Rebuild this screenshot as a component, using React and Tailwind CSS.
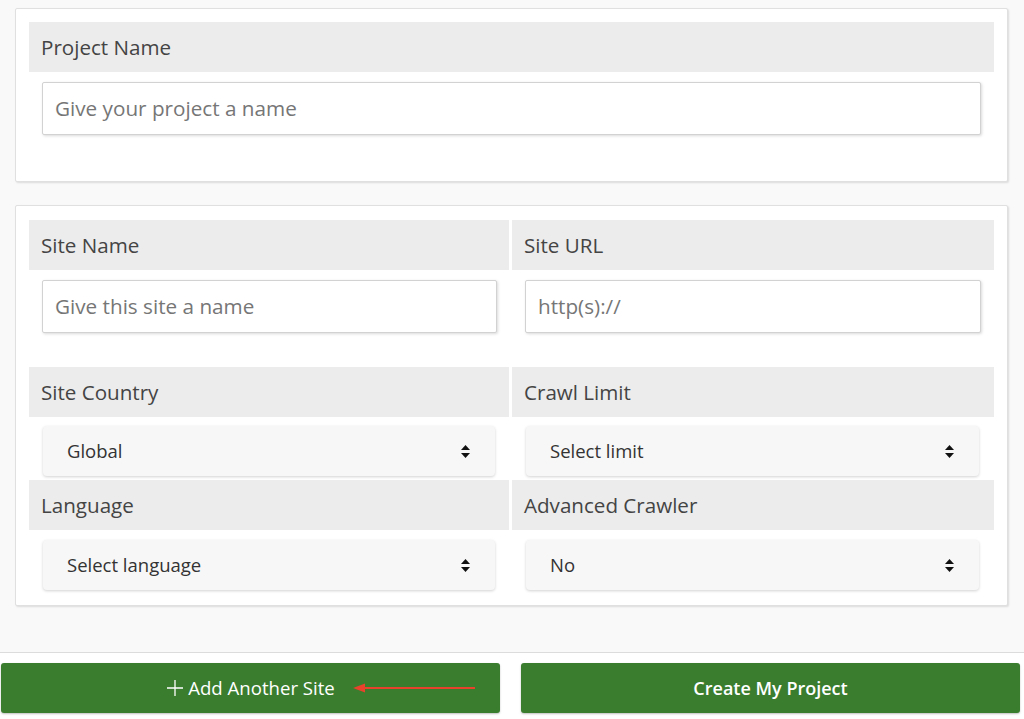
import React from "react";

const font = { fontFamily: '"Open Sans", "Liberation Sans", sans-serif' };

function Header({ children }) {
  return (
    <div className="h-[50px] bg-[#ececec] flex items-center pl-[12px] text-[20.6px] text-[#444]">
      {children}
    </div>
  );
}

function TextInput({ placeholder }) {
  return (
    <div className="h-[53px] bg-white border border-[#d2d2d2] rounded-[2px] shadow-[1px_1px_3px_rgba(0,0,0,0.15)] flex items-center pl-[12px] text-[20.7px] text-[#767676]">
      {placeholder}
    </div>
  );
}

function Arrows() {
  return (
    <svg width="11" height="17" viewBox="0 0 11 17">
      <path d="M1 7 L5.5 2 L10 7 Z" fill="#111" />
      <path d="M1 10 L5.5 15 L10 10 Z" fill="#111" />
    </svg>
  );
}

function Select({ value }) {
  return (
    <div className="h-[50px] bg-[#f7f7f7] rounded-[4px] shadow-[0_1px_3px_rgba(0,0,0,0.18)] flex items-center justify-between pl-[24px] pr-[24px] text-[18.5px] text-[#333]">
      <span>{value}</span>
      <Arrows />
    </div>
  );
}

export default function App() {
  return (
    <div className="w-[1024px] h-[719px] bg-[#f9f9f9] flex flex-col overflow-hidden" style={font}>
      <div className="pl-[15px] pr-[16px] pt-[8px] flex flex-col gap-[23px]">
        {/* Card 1 */}
        <div className="h-[174px] bg-white border border-[#e0e0e0] rounded-[2px] shadow-[1px_1px_2px_rgba(0,0,0,0.12)] pt-[13px] px-[13px]">
          <Header>Project Name</Header>
          <div className="mt-[10px] mx-[13px]">
            <TextInput placeholder="Give your project a name" />
          </div>
        </div>

        {/* Card 2 */}
        <div className="h-[401px] bg-white border border-[#e0e0e0] rounded-[2px] shadow-[1px_1px_2px_rgba(0,0,0,0.12)] pt-[14px] px-[13px]">
          <div className="grid grid-cols-[480px_1fr] gap-x-[3px]">
            <div className="flex flex-col">
              <Header>Site Name</Header>
              <div className="mt-[10px] ml-[13px] mr-[12px]">
                <TextInput placeholder="Give this site a name" />
              </div>
            </div>
            <div className="flex flex-col">
              <Header>Site URL</Header>
              <div className="mt-[10px] ml-[13px] mr-[13px]">
                <TextInput placeholder="http(s)://" />
              </div>
            </div>
          </div>

          <div className="grid grid-cols-[480px_1fr] gap-x-[3px] mt-[34px]">
            <div className="flex flex-col">
              <Header>Site Country</Header>
              <div className="mt-[9px] ml-[14px] mr-[14px]">
                <Select value="Global" />
              </div>
            </div>
            <div className="flex flex-col">
              <Header>Crawl Limit</Header>
              <div className="mt-[9px] ml-[14px] mr-[15px]">
                <Select value="Select limit" />
              </div>
            </div>
          </div>

          <div className="grid grid-cols-[480px_1fr] gap-x-[3px] mt-[4px]">
            <div className="flex flex-col">
              <Header>Language</Header>
              <div className="mt-[10px] ml-[14px] mr-[14px]">
                <Select value="Select language" />
              </div>
            </div>
            <div className="flex flex-col">
              <Header>Advanced Crawler</Header>
              <div className="mt-[10px] ml-[14px] mr-[15px]">
                <Select value="No" />
              </div>
            </div>
          </div>
        </div>
      </div>

      <div className="mt-[46px] border-t border-[#dcdcdc] bg-white flex-1 pt-[10px] pl-[1px] pr-[4px] flex gap-[21px] items-start">
        <button className="flex-1 h-[50px] bg-[#3a7d2e] rounded-[3px] shadow-[0_1px_2px_rgba(0,0,0,0.25)] flex items-center justify-center text-white text-[18.6px] relative">
          <span className="flex items-center gap-[4px]">
            <svg width="18" height="18" viewBox="0 0 18 18">
              <path d="M9 1 V17 M1 9 H17" stroke="#fff" strokeWidth="1.3" />
            </svg>
            Add Another Site
          </span>
          <svg
            width="130"
            height="12"
            viewBox="0 0 130 12"
            className="absolute left-[350px] top-[19px]"
          >
            <path d="M12 6 H124" stroke="#e8412c" strokeWidth="2" />
            <path d="M2 6 L14 1.5 L14 10.5 Z" fill="#e8412c" />
          </svg>
        </button>
        <button className="flex-1 h-[50px] bg-[#3a7d2e] rounded-[3px] shadow-[0_1px_2px_rgba(0,0,0,0.25)] flex items-center justify-center text-white text-[18px] font-semibold">
          Create My Project
        </button>
      </div>
    </div>
  );
}
